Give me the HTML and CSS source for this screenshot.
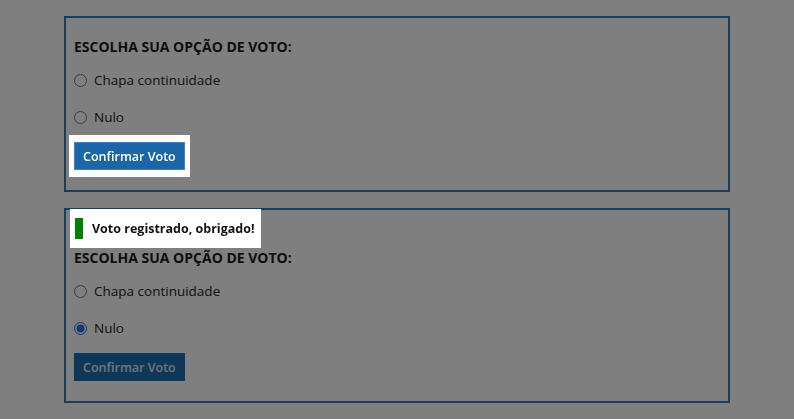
FILE: index.html
```html
<!DOCTYPE html>
<html>
<head>
    <title>Votação</title>
    <link rel="stylesheet" href="styles.css">
</head>
<body>
    <div class="page">
        <form class="vote-box" id="voteFormA">
            <h3 class="vote-title">ESCOLHA SUA OPÇÃO DE VOTO:</h3>
            <label class="vote-option">
                <input type="radio" name="votoA" value="continuidade">
                <span>Chapa continuidade</span>
            </label>
            <label class="vote-option">
                <input type="radio" name="votoA" value="nulo">
                <span>Nulo</span>
            </label>
            <button type="submit" class="btn tour-focus">Confirmar Voto</button>
        </form>

        <form class="vote-box" id="voteFormB">
            <div class="vote-status tour-focus">
                <span class="status-bar"></span>
                <span>Voto registrado, obrigado!</span>
            </div>
            <h3 class="vote-title">ESCOLHA SUA OPÇÃO DE VOTO:</h3>
            <label class="vote-option">
                <input type="radio" name="votoB" value="continuidade">
                <span>Chapa continuidade</span>
            </label>
            <label class="vote-option">
                <input type="radio" name="votoB" value="nulo" checked>
                <span>Nulo</span>
            </label>
            <button type="submit" class="btn" disabled>Confirmar Voto</button>
        </form>
    </div>

    <!-- Tour overlay -->
    <div class="tour-overlay"></div>
</body>
</html>
```

FILE: styles.css
```css
body {
    margin: 0;
    background: #fff;
    color: #222;
    font-family: "Open Sans", "DejaVu Sans", sans-serif;
    font-size: 13.5px;
}

.page {
    display: flex;
    flex-direction: column;
    gap: 16px;
    padding: 16px 64px;
}

.vote-box {
    border: 2px solid #357ab8;
    padding: 19px 8px 20px;
}

.vote-status {
    display: flex;
    align-items: center;
    gap: 9px;
    width: max-content;
    height: 25px;
    padding-right: 1px;
    margin: -13px 0 7px 1px;
    font-size: 12.5px;
    font-weight: bold;
    color: #111;
}

.status-bar {
    width: 8px;
    height: 21px;
    background: #008000;
}

.vote-title {
    margin: 0 0 13px;
    font-size: 14px;
    line-height: 20px;
    font-weight: bold;
    color: #1a1a1a;
}

.vote-option {
    display: flex;
    align-items: center;
    height: 20px;
    margin-bottom: 17px;
}

.vote-option:last-of-type {
    margin-bottom: 15px;
}

.vote-option input {
    width: 13px;
    height: 13px;
    margin: 0 7px 0 0;
    accent-color: #2f6fe0;
}

.btn {
    display: block;
    height: 28px;
    padding: 0 8px;
    border: 1px solid #3c83c3;
    background: #1a66a6;
    color: #fff;
    font-family: inherit;
    font-size: 12.5px;
    font-weight: 600;
    cursor: pointer;
}

.btn:disabled {
    background: #1c70b4;
    border-color: #1c70b4;
    color: #e4edf5;
    cursor: default;
}

.tour-overlay {
    position: fixed;
    top: 0;
    left: 0;
    width: 100%;
    height: 100%;
    background: rgba(0,0,0,0.5);
    z-index: 1000;
}

.tour-focus {
    position: relative;
    z-index: 1001;
    background-color: #fff;
    box-shadow: 0 0 0 4px #fff, 0 -2px 0 5px #fff, 0 2px 0 5px #fff;
}

.btn.tour-focus {
    background-color: #1a66a6;
}
```
